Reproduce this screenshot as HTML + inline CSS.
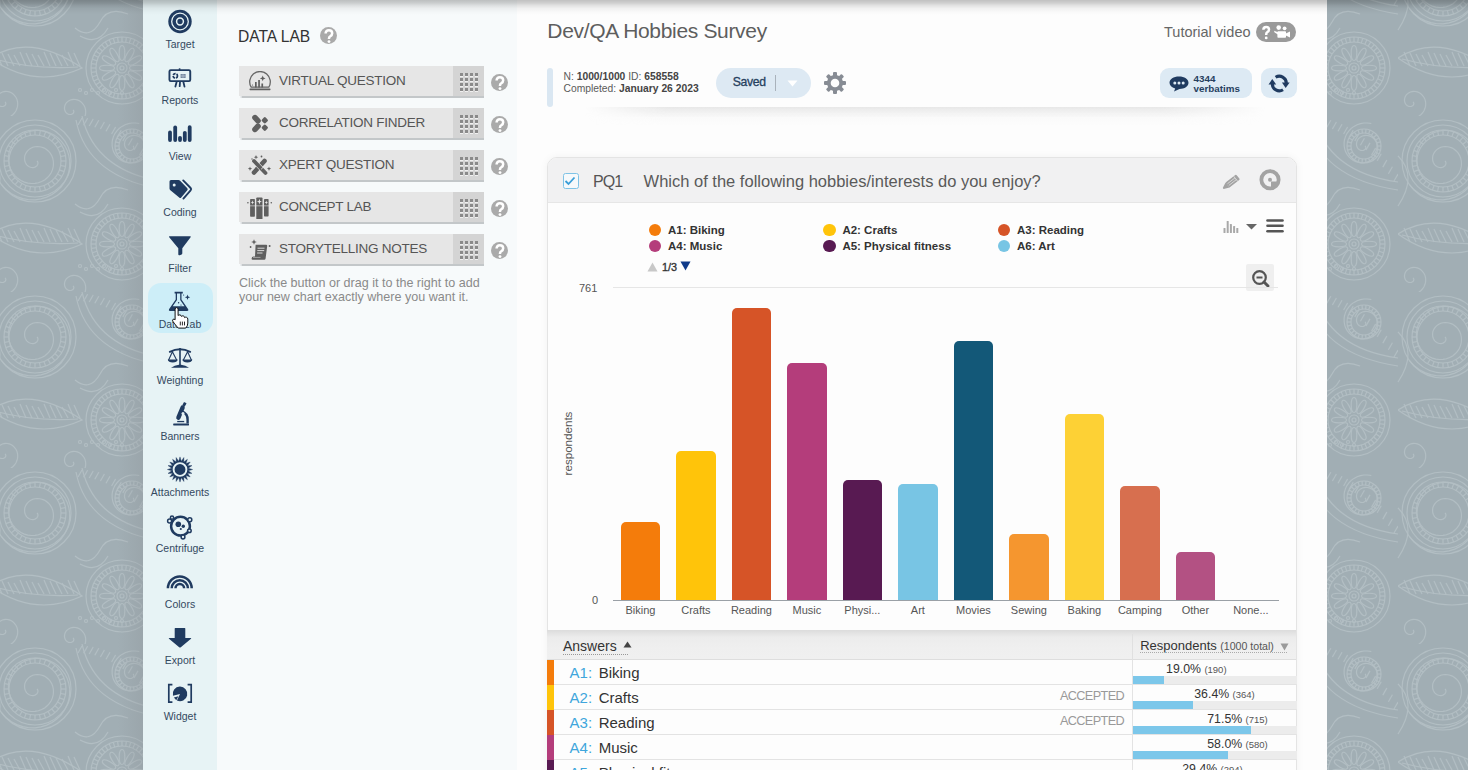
<!DOCTYPE html>
<html><head><meta charset="utf-8">
<style>
*{margin:0;padding:0;box-sizing:border-box}
html,body{width:1468px;height:770px;overflow:hidden}
body{background:#a1aeb4;font-family:"Liberation Sans",sans-serif;position:relative}
#sidebar{position:absolute;left:143px;top:0;width:74px;height:770px}
#sidebg{position:absolute;left:143px;top:0;width:74px;height:770px;background:#e7f3f5}
#datalab{position:absolute;left:217px;top:0;width:300px;height:770px;background:#f7fafb}
#main{position:absolute;left:517px;top:0;width:810px;height:770px;background:#fdfdfd}
#topshadow{position:absolute;left:0;top:0;width:1468px;height:15px;background:linear-gradient(rgba(0,0,0,.24),rgba(0,0,0,.18) 20%,rgba(0,0,0,.11) 36%,rgba(0,0,0,.05) 55%,rgba(0,0,0,.015) 80%,rgba(0,0,0,0))}
.nav{position:absolute;left:0;width:74px;height:56px}
.nav .ic{position:absolute;left:0;top:0}
.nav span{position:absolute;left:0;top:38px;width:74px;text-align:center;font-size:10.5px;color:#34495f;line-height:12px}
.nav .active{position:absolute;left:4.5px;top:3px;width:65px;height:50px;border-radius:13px;background:#cdeef8}
.dl-title{position:absolute;left:238px;top:27.5px;font-size:15.6px;color:#333;line-height:18px}
.help{position:absolute;width:17.6px;height:17.6px;border-radius:50%;background:#aaaaaa;color:#fff;font-weight:bold;font-size:15.5px;line-height:18.5px;text-align:center}
.btn{position:absolute;left:239px;width:245px;height:30px;background:#e6e6e6;box-shadow:0 2px 1px -0.5px #c3c7c9}
.btn .bic{position:absolute;left:8px;top:4.5px;width:26px;height:22px}
.btn .blab{position:absolute;left:40px;top:7px;font-size:13.5px;color:#555;line-height:16px;letter-spacing:-0.25px}
.btn .grip{position:absolute;left:214px;top:0;width:31px;height:30px;background:#d4d4d4}
.btn .grip svg{position:absolute;left:6px;top:5.5px}
.dl-desc{position:absolute;left:239px;top:276px;font-size:12.55px;color:#8a8a8a;line-height:14px}

.title{position:absolute;left:547.3px;top:18.5px;font-size:21px;letter-spacing:-0.33px;color:#5e5e5e;line-height:24px}
.tut{position:absolute;left:1164px;top:24px;font-size:14.5px;color:#666;line-height:17px}
.tutpill{position:absolute;left:1255.9px;top:21.8px;width:39.8px;height:19.8px;border-radius:10px;background:#9a9a9a}
.tutpill svg{position:absolute;left:0;top:0}
.infobar{position:absolute;left:547.4px;top:68px;width:5.4px;height:38.5px;border-radius:3px;background:#dae7f2}
.info1,.info2{position:absolute;left:563.5px;font-size:10.3px;color:#5a5a5a;line-height:12px;white-space:nowrap}
.info1 b,.info2 b{color:#444}
.info1{top:71px}.info2{top:82.7px}
.saved{position:absolute;left:715.8px;top:67.8px;width:95.4px;height:29.8px;border-radius:15px;background:#dde9f3}
.saved span{position:absolute;left:17px;top:7.3px;font-size:12.2px;color:#26405e;line-height:15px;letter-spacing:-0.35px;-webkit-text-stroke:0.3px #26405e}
.saved .sep{position:absolute;left:59.4px;top:7px;width:1px;height:16.3px;background:#a9b2bb}
.saved .tri{position:absolute;left:71px;top:12.5px}
.gear{position:absolute;left:823.4px;top:71px}
.verb{position:absolute;left:1159.6px;top:68px;width:92.2px;height:29.7px;border-radius:9px;background:#ddeaf4}
.verb svg{position:absolute;left:9px;top:8px}
.verb .vt{position:absolute;left:34px;top:6px;font-size:9.8px;line-height:10.2px;color:#26405e}
.refresh{position:absolute;left:1261.4px;top:68px;width:35.4px;height:29.7px;border-radius:9px;background:#ddeaf4}
.refresh svg{position:absolute;left:6.6px;top:4px}
.infoshadow{position:absolute;left:585px;top:107px;width:680px;height:18px;background:linear-gradient(rgba(215,215,215,0.55),rgba(240,240,240,0.2) 60%,rgba(255,255,255,0));-webkit-mask-image:linear-gradient(to right,transparent,#000 12%,#000 85%,transparent)}
.card{position:absolute;left:547.4px;top:157px;width:749.6px;height:620px;border:1px solid #e4e4e4;border-radius:10px 10px 0 0;background:#fdfdfd;box-shadow:0 0 8px rgba(0,0,0,0.05)}
.chead{position:absolute;left:0;top:0;width:747.6px;height:45.4px;background:#f1f1f2;border-radius:9px 9px 0 0;border-bottom:1px solid #e6e6e6}
.cbox{position:absolute;left:14.2px;top:14.8px;width:16.4px;height:16.4px;border:1.6px solid #7fc3e6;border-radius:2.5px;background:#f6f9fb}
.cbox svg{position:absolute;left:0.6px;top:2px}
.pq{position:absolute;left:44.5px;top:13.7px;font-size:16px;color:#555;line-height:19px;letter-spacing:-0.9px}
.qt{position:absolute;left:95.2px;top:13.7px;font-size:16.5px;color:#5a5a5a;line-height:19px}
.pencil{position:absolute;left:673.6px;top:15.3px}
.cicon{position:absolute;left:710.6px;top:10.8px}
.chartarea{position:absolute;left:0;top:0;width:1468px;height:770px;pointer-events:none}
.ldot{position:absolute;width:12.2px;height:12.2px;border-radius:50%}
.ltxt{position:absolute;font-size:11.5px;font-weight:bold;color:#333;line-height:14px;white-space:nowrap}
.navup{position:absolute;left:646.5px;top:261.5px}
.navdn{position:absolute;left:679.5px;top:260.5px}
.pg{position:absolute;left:662px;top:261px;font-size:10.8px;color:#333;line-height:13px;-webkit-text-stroke:0.35px #333}
.barico{position:absolute;left:1222.5px;top:219.5px}
.dd{position:absolute;left:1245.5px;top:223.5px}
.hamb{position:absolute;left:1266px;top:218.5px}
.zoombtn{position:absolute;left:1246px;top:264.2px;width:27.7px;height:27px;background:#efefef;border-radius:2px}
.zoombtn svg{position:absolute;left:3.5px;top:3.5px}
.grid{position:absolute;left:613px;top:287px;width:665px;height:1px;background:#e6e6e6}
.axis{position:absolute;left:613px;top:599.5px;width:666px;height:1px;background:#9aa0a6}
.yl{position:absolute;left:579px;font-size:11px;color:#555;line-height:13px}
.ylab{position:absolute;left:535px;top:437px;width:64px;font-size:11.6px;color:#555;line-height:13px;transform:rotate(-90deg);text-align:center}
.bar{position:absolute;width:39.2px;border-radius:5px 5px 0 0}
.xl{position:absolute;top:603.5px;width:80px;text-align:center;font-size:11px;color:#555;line-height:13px}
.thead{position:absolute;left:547.4px;top:630px;width:749px;height:30px;background:linear-gradient(#dcdcdc,#ececec 25%,#efefef 60%,#f0f0f0);border-bottom:1px solid #dedede}
.th1{position:absolute;left:15.6px;top:7.5px;font-size:14px;color:#333;line-height:17px}
.th1t{position:absolute;left:75.6px;top:11.3px}
.th1u{position:absolute;left:15.6px;top:24px;width:65px;height:1px;border-top:1px dotted #999}
.th2{position:absolute;left:592.8px;top:5.5px;white-space:nowrap;color:#333;line-height:17px}
.th2 .rs{font-size:13px}
.th2 .tot{font-size:10.6px;color:#555;margin-left:-1px}
.th2t{position:absolute;left:732.6px;top:12.5px}
.th2u{position:absolute;left:592.8px;top:21.5px;width:147px;height:1px;border-top:1px dotted #aaa}
.thead:after{content:"";position:absolute;left:584.9px;top:4px;width:1px;height:26px;background:#e0e0e0}
.row{position:absolute;left:547.4px;width:749px;height:25px;background:#fdfdfd;border-bottom:1px solid #e3e3e3}
.strip{position:absolute;left:0;top:0;width:6.3px;height:25px}
.ak{position:absolute;left:22.2px;top:4px;font-size:15px;color:#3fa6dc;line-height:18px}
.an{position:absolute;left:51.3px;top:4px;font-size:15px;color:#333;line-height:18px}
.acc{position:absolute;left:512.5px;top:3.8px;font-size:12.7px;color:#999;line-height:14px;letter-spacing:-0.62px}
.rcell{position:absolute;left:584.9px;top:0;width:164px;height:25px;border-left:1px solid #e3e3e3}
.track{position:absolute;left:0;top:15.9px;width:164px;height:8px;background:#ececec}
.fill{position:absolute;left:0;top:0;height:8px;background:#7cc7ea}
.pct{position:absolute;top:1.5px;font-size:12.3px;color:#333;line-height:14px;white-space:nowrap}
.pct small{font-size:9.5px;color:#555}
</style></head><body>
<svg id="bgpat" width="1468" height="770" style="position:absolute;left:0;top:0"><defs><pattern id="pz" width="176" height="176" patternUnits="userSpaceOnUse" x="-10" y="-60"><g fill="none" stroke="#b2bec3" stroke-width="1.15"><polyline points="47.0,45.0 47.4,45.4 47.7,45.9 47.9,46.5 47.9,47.1 47.9,47.9 47.6,48.6 47.2,49.3 46.6,50.0 45.9,50.6 45.0,51.1 44.0,51.4 42.9,51.6 41.7,51.5 40.5,51.2 39.3,50.7 38.1,50.0 37.0,49.1 36.1,47.9 35.4,46.5 34.8,45.0 34.6,43.3 34.6,41.6 34.8,39.8 35.5,38.1 36.4,36.4 37.6,34.8 39.1,33.4 40.8,32.2 42.8,31.3 45.0,30.7 47.3,30.5 49.7,30.7 52.0,31.2 54.3,32.1 56.5,33.5 58.5,35.2 60.2,37.2 61.7,39.6 62.7,42.2 63.3,45.0 63.5,47.9 63.2,50.9 62.4,53.9 61.2,56.7 59.4,59.4 57.2,61.8 54.6,63.9 51.7,65.5 48.4,66.7 45.0,67.4 41.4,67.5 37.8,67.1 34.3,66.1 30.9,64.5 27.7,62.3 24.9,59.6 22.5,56.5 20.6,52.9 19.2,49.1 18.5,45.0 18.4,40.8 19.0,36.6 20.3,32.4 22.2,28.5 24.8,24.8 28.0,21.6 31.7,18.8 35.8,16.7 40.3,15.2 45.0,14.4 49.8,14.4 54.7,15.1 59.4,16.7 63.9,18.9 68.1,21.9 71.7,25.6 74.8,29.8 77.2,34.5 78.8,39.6 79.7,45.0 79.6,50.5 78.8,56.0 77.0,61.3 74.4,66.3 71.0,71.0 66.8,75.0 62.0,78.4 56.7,81.1 51.0,82.9 45.0,83.8 38.9,83.7 32.8,82.6 26.8,80.6 21.3,77.7 16.2,73.8 11.7,69.2" fill="none"/><circle cx="45" cy="45" r="26"/><circle cx="45" cy="45" r="31"/><line x1="71.0" y1="45.0" x2="76.0" y2="45.0"/><line x1="70.6" y1="49.5" x2="75.5" y2="50.4"/><line x1="69.4" y1="53.9" x2="74.1" y2="55.6"/><line x1="67.5" y1="58.0" x2="71.8" y2="60.5"/><line x1="64.9" y1="61.7" x2="68.7" y2="64.9"/><line x1="61.7" y1="64.9" x2="64.9" y2="68.7"/><line x1="58.0" y1="67.5" x2="60.5" y2="71.8"/><line x1="53.9" y1="69.4" x2="55.6" y2="74.1"/><line x1="49.5" y1="70.6" x2="50.4" y2="75.5"/><line x1="45.0" y1="71.0" x2="45.0" y2="76.0"/><line x1="40.5" y1="70.6" x2="39.6" y2="75.5"/><line x1="36.1" y1="69.4" x2="34.4" y2="74.1"/><line x1="32.0" y1="67.5" x2="29.5" y2="71.8"/><line x1="28.3" y1="64.9" x2="25.1" y2="68.7"/><line x1="25.1" y1="61.7" x2="21.3" y2="64.9"/><line x1="22.5" y1="58.0" x2="18.2" y2="60.5"/><line x1="20.6" y1="53.9" x2="15.9" y2="55.6"/><line x1="19.4" y1="49.5" x2="14.5" y2="50.4"/><line x1="19.0" y1="45.0" x2="14.0" y2="45.0"/><line x1="19.4" y1="40.5" x2="14.5" y2="39.6"/><line x1="20.6" y1="36.1" x2="15.9" y2="34.4"/><line x1="22.5" y1="32.0" x2="18.2" y2="29.5"/><line x1="25.1" y1="28.3" x2="21.3" y2="25.1"/><line x1="28.3" y1="25.1" x2="25.1" y2="21.3"/><line x1="32.0" y1="22.5" x2="29.5" y2="18.2"/><line x1="36.1" y1="20.6" x2="34.4" y2="15.9"/><line x1="40.5" y1="19.4" x2="39.6" y2="14.5"/><line x1="45.0" y1="19.0" x2="45.0" y2="14.0"/><line x1="49.5" y1="19.4" x2="50.4" y2="14.5"/><line x1="53.9" y1="20.6" x2="55.6" y2="15.9"/><line x1="58.0" y1="22.5" x2="60.5" y2="18.2"/><line x1="61.7" y1="25.1" x2="64.9" y2="21.3"/><line x1="64.9" y1="28.3" x2="68.7" y2="25.1"/><line x1="67.5" y1="32.0" x2="71.8" y2="29.5"/><line x1="69.4" y1="36.1" x2="74.1" y2="34.4"/><line x1="70.6" y1="40.5" x2="75.5" y2="39.6"/><circle cx="45" cy="45" r="36"/><circle cx="45" cy="45" r="41"/><circle cx="132" cy="128" r="5"/><circle cx="132" cy="128" r="2"/><ellipse cx="147.0" cy="128.0" rx="7.5" ry="2.8" transform="rotate(0.0 147.0 128.0)"/><ellipse cx="145.0" cy="135.5" rx="7.5" ry="2.8" transform="rotate(30.0 145.0 135.5)"/><ellipse cx="139.5" cy="141.0" rx="7.5" ry="2.8" transform="rotate(60.0 139.5 141.0)"/><ellipse cx="132.0" cy="143.0" rx="7.5" ry="2.8" transform="rotate(90.0 132.0 143.0)"/><ellipse cx="124.5" cy="141.0" rx="7.5" ry="2.8" transform="rotate(120.0 124.5 141.0)"/><ellipse cx="119.0" cy="135.5" rx="7.5" ry="2.8" transform="rotate(150.0 119.0 135.5)"/><ellipse cx="117.0" cy="128.0" rx="7.5" ry="2.8" transform="rotate(180.0 117.0 128.0)"/><ellipse cx="119.0" cy="120.5" rx="7.5" ry="2.8" transform="rotate(210.0 119.0 120.5)"/><ellipse cx="124.5" cy="115.0" rx="7.5" ry="2.8" transform="rotate(240.0 124.5 115.0)"/><ellipse cx="132.0" cy="113.0" rx="7.5" ry="2.8" transform="rotate(270.0 132.0 113.0)"/><ellipse cx="139.5" cy="115.0" rx="7.5" ry="2.8" transform="rotate(300.0 139.5 115.0)"/><ellipse cx="145.0" cy="120.5" rx="7.5" ry="2.8" transform="rotate(330.0 145.0 120.5)"/><circle cx="132" cy="128" r="26"/><circle cx="132" cy="128" r="31"/><line x1="158.0" y1="128.0" x2="163.0" y2="128.0"/><line x1="157.7" y1="131.7" x2="162.7" y2="132.4"/><line x1="156.9" y1="135.3" x2="161.7" y2="136.7"/><line x1="155.7" y1="138.8" x2="160.2" y2="140.9"/><line x1="153.9" y1="142.1" x2="158.1" y2="144.8"/><line x1="151.6" y1="145.0" x2="155.4" y2="148.3"/><line x1="149.0" y1="147.6" x2="152.3" y2="151.4"/><line x1="146.1" y1="149.9" x2="148.8" y2="154.1"/><line x1="142.8" y1="151.7" x2="144.9" y2="156.2"/><line x1="139.3" y1="152.9" x2="140.7" y2="157.7"/><line x1="135.7" y1="153.7" x2="136.4" y2="158.7"/><line x1="132.0" y1="154.0" x2="132.0" y2="159.0"/><line x1="128.3" y1="153.7" x2="127.6" y2="158.7"/><line x1="124.7" y1="152.9" x2="123.3" y2="157.7"/><line x1="121.2" y1="151.7" x2="119.1" y2="156.2"/><line x1="117.9" y1="149.9" x2="115.2" y2="154.1"/><line x1="115.0" y1="147.6" x2="111.7" y2="151.4"/><line x1="112.4" y1="145.0" x2="108.6" y2="148.3"/><line x1="110.1" y1="142.1" x2="105.9" y2="144.8"/><line x1="108.3" y1="138.8" x2="103.8" y2="140.9"/><line x1="107.1" y1="135.3" x2="102.3" y2="136.7"/><line x1="106.3" y1="131.7" x2="101.3" y2="132.4"/><line x1="106.0" y1="128.0" x2="101.0" y2="128.0"/><line x1="106.3" y1="124.3" x2="101.3" y2="123.6"/><line x1="107.1" y1="120.7" x2="102.3" y2="119.3"/><line x1="108.3" y1="117.2" x2="103.8" y2="115.1"/><line x1="110.1" y1="113.9" x2="105.9" y2="111.2"/><line x1="112.4" y1="111.0" x2="108.6" y2="107.7"/><line x1="115.0" y1="108.4" x2="111.7" y2="104.6"/><line x1="117.9" y1="106.1" x2="115.2" y2="101.9"/><line x1="121.2" y1="104.3" x2="119.1" y2="99.8"/><line x1="124.7" y1="103.1" x2="123.3" y2="98.3"/><line x1="128.3" y1="102.3" x2="127.6" y2="97.3"/><line x1="132.0" y1="102.0" x2="132.0" y2="97.0"/><line x1="135.7" y1="102.3" x2="136.4" y2="97.3"/><line x1="139.3" y1="103.1" x2="140.7" y2="98.3"/><line x1="142.8" y1="104.3" x2="144.9" y2="99.8"/><line x1="146.1" y1="106.1" x2="148.8" y2="101.9"/><line x1="149.0" y1="108.4" x2="152.3" y2="104.6"/><line x1="151.6" y1="111.0" x2="155.4" y2="107.7"/><line x1="153.9" y1="113.9" x2="158.1" y2="111.2"/><line x1="155.7" y1="117.2" x2="160.2" y2="115.1"/><line x1="156.9" y1="120.7" x2="161.7" y2="119.3"/><line x1="157.7" y1="124.3" x2="162.7" y2="123.6"/><circle cx="132" cy="128" r="36"/><path d="M0 118 Q40 92 92 128 Q45 150 0 118 Z"/><path d="M4 119 Q45 130 88 127"/><line x1="6" y1="112" x2="12" y2="126"/><line x1="12" y1="113" x2="18" y2="126"/><line x1="18" y1="114" x2="24" y2="126"/><line x1="24" y1="115" x2="30" y2="126"/><line x1="30" y1="112" x2="36" y2="126"/><line x1="36" y1="113" x2="42" y2="126"/><line x1="42" y1="114" x2="48" y2="126"/><line x1="48" y1="115" x2="54" y2="126"/><line x1="54" y1="112" x2="60" y2="126"/><line x1="60" y1="113" x2="66" y2="126"/><line x1="66" y1="114" x2="72" y2="126"/><line x1="72" y1="115" x2="78" y2="126"/><line x1="78" y1="112" x2="84" y2="126"/><line x1="84" y1="113" x2="90" y2="126"/><polyline points="143.0,30.0 143.3,30.2 143.5,30.5 143.7,30.9 143.8,31.3 143.8,31.8 143.7,32.3 143.5,32.9 143.1,33.3 142.6,33.8 142.0,34.1 141.3,34.4 140.5,34.5 139.7,34.5 138.8,34.4 138.0,34.0 137.1,33.5 136.4,32.9 135.7,32.1 135.1,31.1 134.7,30.0 134.5,28.8 134.5,27.6 134.7,26.3 135.1,25.0 135.7,23.7 136.6,22.6 137.7,21.6 139.0,20.7 140.4,20.0 142.0,19.6 143.7,19.4 145.4,19.5 147.2,19.9 148.9,20.5 150.5,21.5 152.0,22.8 153.2,24.3 154.3,26.0 155.1,27.9 155.6,30.0 155.7,32.2 155.5,34.4 154.9,36.6 154.0,38.7 152.7,40.7 151.1,42.5 149.2,44.0 147.0,45.3 144.6,46.2 142.0,46.7 139.3,46.8 136.6,46.5 134.0,45.7 131.4,44.5 129.1,42.9 127.0,40.9 125.2,38.6 123.7,35.9 122.7,33.1 122.2,30.0 122.1,26.8 122.5,23.7 123.5,20.6 124.9,17.6 126.9,14.9 129.2,12.4 132.0,10.4 135.1,8.7 138.5,7.6 142.0,7.0 145.6,7.0 149.3,7.5" fill="none"/><circle cx="142" cy="30" r="13"/><circle cx="142" cy="30" r="17"/><line x1="155.0" y1="30.0" x2="159.0" y2="30.0"/><line x1="154.6" y1="33.1" x2="158.5" y2="34.1"/><line x1="153.5" y1="36.0" x2="157.1" y2="37.9"/><line x1="151.7" y1="38.6" x2="154.7" y2="41.3"/><line x1="149.4" y1="40.7" x2="151.7" y2="44.0"/><line x1="146.6" y1="42.2" x2="148.0" y2="45.9"/><line x1="143.6" y1="42.9" x2="144.0" y2="46.9"/><line x1="140.4" y1="42.9" x2="140.0" y2="46.9"/><line x1="137.4" y1="42.2" x2="136.0" y2="45.9"/><line x1="134.6" y1="40.7" x2="132.3" y2="44.0"/><line x1="132.3" y1="38.6" x2="129.3" y2="41.3"/><line x1="130.5" y1="36.0" x2="126.9" y2="37.9"/><line x1="129.4" y1="33.1" x2="125.5" y2="34.1"/><line x1="129.0" y1="30.0" x2="125.0" y2="30.0"/><line x1="129.4" y1="26.9" x2="125.5" y2="25.9"/><line x1="130.5" y1="24.0" x2="126.9" y2="22.1"/><line x1="132.3" y1="21.4" x2="129.3" y2="18.7"/><line x1="134.6" y1="19.3" x2="132.3" y2="16.0"/><line x1="137.4" y1="17.8" x2="136.0" y2="14.1"/><line x1="140.4" y1="17.1" x2="140.0" y2="13.1"/><line x1="143.6" y1="17.1" x2="144.0" y2="13.1"/><line x1="146.6" y1="17.8" x2="148.0" y2="14.1"/><line x1="149.4" y1="19.3" x2="151.7" y2="16.0"/><line x1="151.7" y1="21.4" x2="154.7" y2="18.7"/><line x1="153.5" y1="24.0" x2="157.1" y2="22.1"/><line x1="154.6" y1="26.9" x2="158.5" y2="25.9"/><polyline points="83.0,170.0 83.3,170.2 83.5,170.5 83.7,170.9 83.8,171.3 83.8,171.8 83.7,172.3 83.5,172.9 83.1,173.3 82.6,173.8 82.0,174.1 81.3,174.4 80.5,174.5 79.7,174.5 78.8,174.4 78.0,174.0 77.1,173.5 76.4,172.9 75.7,172.1 75.1,171.1 74.7,170.0 74.5,168.8 74.5,167.6 74.7,166.3 75.1,165.0 75.7,163.7 76.6,162.6 77.7,161.6 79.0,160.7 80.4,160.0 82.0,159.6 83.7,159.4 85.4,159.5 87.2,159.9 88.9,160.5 90.5,161.5 92.0,162.8 93.2,164.3 94.3,166.0 95.1,167.9 95.6,170.0 95.7,172.2 95.5,174.4 94.9,176.6 94.0,178.7 92.7,180.7 91.1,182.5 89.2,184.0 87.0,185.3 84.6,186.2 82.0,186.7 79.3,186.8 76.6,186.5 74.0,185.7 71.4,184.5 69.1,182.9 67.0,180.9" fill="none"/><polyline points="15.0,162.0 15.3,162.2 15.5,162.5 15.7,162.9 15.8,163.3 15.8,163.8 15.7,164.3 15.5,164.9 15.1,165.3 14.6,165.8 14.0,166.1 13.3,166.4 12.5,166.5 11.7,166.5 10.8,166.4 10.0,166.0 9.1,165.5 8.4,164.9 7.7,164.1 7.1,163.1 6.7,162.0 6.5,160.8 6.5,159.6 6.7,158.3 7.1,157.0 7.7,155.7 8.6,154.6 9.7,153.6 11.0,152.7 12.4,152.0 14.0,151.6 15.7,151.4 17.4,151.5 19.2,151.9 20.9,152.5 22.5,153.5 24.0,154.8 25.2,156.3 26.3,158.0 27.1,159.9 27.6,162.0 27.7,164.2 27.5,166.4 26.9,168.6 26.0,170.7 24.7,172.7 23.1,174.5 21.2,176.0 19.0,177.3 16.6,178.2 14.0,178.7 11.3,178.8 8.6,178.5" fill="none"/><path d="M92 0 Q105 56 176 66"/><path d="M86 4 Q97 62 176 74"/><line x1="92.0" y1="2.0" x2="88.0" y2="9.0"/><line x1="97.6" y1="2.2" x2="93.6" y2="9.2"/><line x1="103.2" y1="3.0" x2="99.2" y2="10.0"/><line x1="108.8" y1="4.2" x2="104.8" y2="11.2"/><line x1="114.4" y1="6.0" x2="110.4" y2="13.0"/><line x1="120.0" y1="8.2" x2="116.0" y2="15.2"/><line x1="125.6" y1="11.0" x2="121.6" y2="18.0"/><line x1="131.2" y1="14.2" x2="127.2" y2="21.2"/><line x1="136.8" y1="17.9" x2="132.8" y2="24.9"/><line x1="142.4" y1="22.2" x2="138.4" y2="29.2"/><line x1="148.0" y1="26.9" x2="144.0" y2="33.9"/><line x1="153.6" y1="32.1" x2="149.6" y2="39.1"/><line x1="159.2" y1="37.8" x2="155.2" y2="44.8"/><line x1="164.8" y1="44.1" x2="160.8" y2="51.1"/><line x1="170.4" y1="50.8" x2="166.4" y2="57.8"/><line x1="176.0" y1="58.0" x2="172.0" y2="65.0"/><path d="M0 90 Q20 60 0 40"/><path d="M176 90 Q196 60 176 40"/><path d="M85 88 Q100 100 110 82 Q118 66 138 74"/><path d="M90 96 Q108 106 118 88"/><circle cx="90" cy="150" r="1.5"/><circle cx="96" cy="153" r="1.5"/><circle cx="102" cy="150" r="1.5"/><circle cx="108" cy="153" r="1.5"/><circle cx="114" cy="150" r="1.5"/><circle cx="120" cy="153" r="1.5"/><circle cx="126" cy="150" r="1.5"/><circle cx="132" cy="153" r="1.5"/></g></pattern><linearGradient id="edge" x1="0" x2="1"><stop offset="0" stop-color="#8f969b" stop-opacity="0"/><stop offset="1" stop-color="#8f969b" stop-opacity="0.35"/></linearGradient></defs><rect width="1468" height="770" fill="url(#pz)"/><rect x="118" y="0" width="25" height="770" fill="url(#edge)"/></svg>
<div id="sidebg"></div><div id="datalab"></div><div id="main"></div><div id="topshadow"></div>
<div id="sidebar">
<div class="nav" style="top:0px"><svg class="ic" width="74" height="56"><circle cx="37" cy="21.5" r="11.7" fill="#203b60"/><circle cx="37" cy="21.5" r="8.3" fill="none" stroke="#e7f3f5" stroke-width="1.3"/><circle cx="37" cy="21.5" r="3.4" fill="none" stroke="#e7f3f5" stroke-width="1.5"/></svg><span>Target</span></div>
<div class="nav" style="top:56px"><svg class="ic" width="74" height="56"><rect x="26.45" y="14.15" width="20.8" height="11" rx="1.3" fill="none" stroke="#203b60" stroke-width="1.9"/><rect x="35.8" y="12.3" width="1.6" height="2" fill="#203b60"/><circle cx="32.3" cy="19.9" r="2.2" fill="none" stroke="#203b60" stroke-width="1.7" stroke-dasharray="2.6 0.9"/><rect x="37.6" y="18" width="5" height="4" fill="#6d809a"/><path d="M37.6 19.3 H42.6 M37.6 20.7 H42.6 M40 18 V22" stroke="#c7d0da" stroke-width="0.5"/><path d="M33.6 26 L32.4 30.6 M37 26 L36.7 30.2 M40.4 26 L41.5 30.6" stroke="#203b60" stroke-width="1.8" stroke-linecap="round"/></svg><span>Reports</span></div>
<div class="nav" style="top:112px"><svg class="ic" width="74" height="56"><g stroke="#203b60" stroke-width="3.8" stroke-linecap="round"><path d="M27 20.5 V28.1"/><path d="M32.2 15.5 V28.1"/><path d="M37 25.8 V28.1"/><path d="M41.8 20.8 V28.1"/><path d="M46.7 15.1 V28.1"/></g></svg><span>View</span></div>
<div class="nav" style="top:168px"><svg class="ic" width="74" height="56"><path d="M28 12 H35.5 Q36.3 12 36.9 12.6 L44.3 20.2 Q45.2 21.2 44.3 22.2 L38.2 29.6 Q37.2 30.6 36.2 29.6 L27.1 21.9 Q26.5 21.3 26.5 20.5 V13.5 Q26.5 12 28 12 Z" fill="#203b60"/><circle cx="31.2" cy="16.9" r="1.5" fill="#e7f3f5"/><path d="M40.2 12.4 L47.6 20 Q48.7 21.2 47.6 22.4 L40.4 30.6" fill="none" stroke="#203b60" stroke-width="1.9" stroke-linecap="round"/></svg><span>Coding</span></div>
<div class="nav" style="top:224px"><svg class="ic" width="74" height="56"><path d="M26.6 12.3 H47.2 Q48.2 12.3 47.6 13.2 L39.3 24.3 V29.2 Q39.3 30 38.6 30.4 L36.8 31.2 Q35.3 31.8 35.3 30.2 V24.3 L26.2 13.2 Q25.6 12.3 26.6 12.3 Z" fill="#203b60"/></svg><span>Filter</span></div>
<div class="nav" style="top:280px"><div class="active"></div><svg class="ic" width="74" height="56"><path d="M31.6 11.8 H39.8 V13.4 H38.5 V19.6 L45.2 29.3 Q45.9 31 44.2 31 H27 Q25.3 31 26 29.3 L32.7 19.6 V13.4 H31.6 Z" fill="#203b60"/><path d="M34 13.4 H37.2 V20 L41.5 26.3 H29.7 L34 20 Z" fill="#cdeef8"/><circle cx="35.6" cy="22.8" r="0.7" fill="#203b60"/><circle cx="38" cy="25" r="0.6" fill="#203b60"/><path d="M44.5 14.6 L45.2 16.6 L47.2 17.3 L45.2 18 L44.5 20 L43.8 18 L41.8 17.3 L43.8 16.6 Z" fill="#203b60"/><circle cx="40.6" cy="15" r="0.6" fill="#203b60"/></svg><span>Data Lab</span><svg class="ic" width="74" height="56"><g transform="translate(29.1 27.6)"><path d="M3 1.6 Q3 0 4.5 0 Q6 0 6 1.6 V8 Q6.5 7.1 7.8 7.3 Q9.2 7.5 9.3 8.8 Q10 8 11.2 8.3 Q12.4 8.6 12.5 10 Q13.3 9.3 14.4 9.7 Q15.7 10.1 15.7 11.5 V15.5 Q15.7 18.5 13.6 20.5 H6.2 Q4.6 18.8 2.6 16.3 L0.7 13.6 Q0 12.4 1 11.7 Q2 11.1 3 12.2 Z" fill="#fff" stroke="#111" stroke-width="1"/><path d="M8.2 14 V17.8 M10.3 14 V17.8 M12.4 14 V17.8" stroke="#111" stroke-width="0.9"/></g></svg></div>
<div class="nav" style="top:336px"><svg class="ic" width="74" height="56"><path d="M26.8 15.8 Q37 10.6 47.2 15.8" fill="none" stroke="#203b60" stroke-width="1.9" stroke-linecap="round"/><path d="M37 12 V30" stroke="#203b60" stroke-width="1.6"/><g fill="none" stroke="#203b60" stroke-width="1.1"><path d="M25.4 24.4 L29.4 15.8 L33.9 24.4"/><path d="M40.1 24.4 L44.6 15.8 L48.6 24.4"/></g><path d="M24.8 23.6 H34.7 Q34.3 26.6 29.75 26.6 Q25.2 26.6 24.8 23.6 Z" fill="#203b60"/><path d="M39.4 23.6 H49.3 Q48.9 26.6 44.35 26.6 Q39.8 26.6 39.4 23.6 Z" fill="#203b60"/><path d="M28 31.8 Q31 29.6 37 28.6 Q43 29.6 46 31.8 Z" fill="#203b60"/></svg><span>Weighting</span></div>
<div class="nav" style="top:392px"><svg class="ic" width="74" height="56"><rect x="40" y="10.4" width="2.8" height="3.8" rx="0.4" fill="#203b60" transform="rotate(28 41.4 12.3)"/><path d="M39.6 15.6 L35.4 25.6" stroke="#203b60" stroke-width="4.4" stroke-linecap="round"/><path d="M38.6 19.2 Q44.8 21.6 44.6 27.8 V31.5" fill="none" stroke="#203b60" stroke-width="2.4"/><circle cx="40" cy="21.4" r="1.5" fill="#e7f3f5"/><rect x="34.2" y="28.9" width="7" height="1.3" fill="#203b60"/><rect x="30.2" y="31.5" width="15.8" height="2" rx="0.4" fill="#203b60"/></svg><span>Banners</span></div>
<div class="nav" style="top:448px"><svg class="ic" width="74" height="56"><polygon points="37.00,8.90 38.31,13.20 40.89,9.52 40.81,14.02 44.41,11.31 42.94,15.56 47.19,14.09 44.48,17.69 48.98,17.61 45.30,20.19 49.60,21.50 45.30,22.81 48.98,25.39 44.48,25.31 47.19,28.91 42.94,27.44 44.41,31.69 40.81,28.98 40.89,33.48 38.31,29.80 37.00,34.10 35.69,29.80 33.11,33.48 33.19,28.98 29.59,31.69 31.06,27.44 26.81,28.91 29.52,25.31 25.02,25.39 28.70,22.81 24.40,21.50 28.70,20.19 25.02,17.61 29.52,17.69 26.81,14.09 31.06,15.56 29.59,11.31 33.19,14.02 33.11,9.52 35.69,13.20" fill="#203b60" stroke="#203b60" stroke-width="0.4" stroke-linejoin="round"/><circle cx="37" cy="21.5" r="6.4" fill="none" stroke="#e7f3f5" stroke-width="1.9"/></svg><span>Attachments</span></div>
<div class="nav" style="top:504px"><svg class="ic" width="74" height="56"><circle cx="37.5" cy="22.2" r="9.4" fill="none" stroke="#203b60" stroke-width="2.5"/><g fill="#e7f3f5" stroke="#203b60" stroke-width="1.5"><circle cx="29" cy="13.6" r="1.6"/><circle cx="26.6" cy="17" r="2"/><circle cx="46.8" cy="15.8" r="2"/><circle cx="46.4" cy="26.8" r="1.8"/><circle cx="40" cy="33" r="1.9"/></g><circle cx="35.3" cy="20.3" r="2.8" fill="#203b60"/><circle cx="40.3" cy="22.2" r="1.7" fill="#203b60"/><circle cx="37.8" cy="25" r="1.1" fill="#203b60"/></svg><span>Centrifuge</span></div>
<div class="nav" style="top:560px"><svg class="ic" width="74" height="56"><g fill="none" stroke="#203b60" stroke-width="2.5" stroke-linecap="butt"><path d="M24.9 28.3 A11.9 11.9 0 0 1 48.7 28.3"/><path d="M28.7 28.3 A8.1 8.1 0 0 1 44.9 28.3"/><path d="M32.5 28.3 A4.3 4.3 0 0 1 41.1 28.3"/></g></svg><span>Colors</span></div>
<div class="nav" style="top:616px"><svg class="ic" width="74" height="56"><path d="M32.3 11.9 H41.7 Q42.3 11.9 42.3 12.5 V21.9 H47.6 Q48.8 21.9 48 22.8 L37.8 31.2 Q37 32 36.2 31.2 L26 22.8 Q25.2 21.9 26.4 21.9 H31.7 V12.5 Q31.7 11.9 32.3 11.9 Z" fill="#203b60"/></svg><span>Export</span></div>
<div class="nav" style="top:672px"><svg class="ic" width="74" height="56"><path d="M29.4 12.6 H25.8 V30.2 H29.4" fill="none" stroke="#203b60" stroke-width="1.7"/><path d="M44.6 12.6 H48.2 V30.2 H44.6" fill="none" stroke="#203b60" stroke-width="1.7"/><path d="M37 21.9 L29.95 23.79 A7.3 7.3 0 1 1 33.91 28.52 Z" fill="#203b60"/><path d="M35.4 24.2 L33.3 28.2 L30.9 25.6 Z" fill="#203b60"/></svg><span>Widget</span></div>
</div>

<div class="dl-title">DATA LAB</div>
<div class="help" style="left:319.5px;top:26.5px"><svg width="17.6" height="17.6" viewBox="0 0 17.6 17.6" style="position:absolute;left:0;top:0"><path d="M5.6 6.6 Q5.6 3.3 8.9 3.3 Q12.2 3.3 12.2 6.3 Q12.2 8.3 10.2 9.3 Q9 9.9 9 11.4 V12" fill="none" stroke="#fff" stroke-width="2.5"/><circle cx="9" cy="14.6" r="1.45" fill="#fff"/></svg></div>
<div class="btn" style="top:66px"><div class="bic"><svg width="26" height="22" viewBox="0 0 26 22"><path d="M4.2 16.2 A10.3 10.3 0 1 1 21.8 16.2 Z" fill="none" stroke="#666" stroke-width="1.3"/><rect x="2.5" y="17.6" width="21" height="1.6" rx="0.6" fill="#5f5f5f"/><rect x="8" y="11" width="1.7" height="5.5" fill="#5f5f5f"/><rect x="11.2" y="9" width="1.7" height="7.5" fill="#5f5f5f"/><rect x="14.4" y="12.5" width="1.7" height="4" fill="#5f5f5f"/><circle cx="5.5" cy="14" r="0.6" fill="#5f5f5f"/><path d="M15.7 4.6 L16.5 6.6 L18.5 7.4 L16.5 8.2 L15.7 10.2 L14.9 8.2 L12.9 7.4 L14.9 6.6 Z" fill="#5f5f5f"/></svg></div><span class="blab">VIRTUAL QUESTION</span><div class="grip"><svg width="20" height="20" viewBox="0 0 20 20"><rect x="1" y="1" width="3" height="3" fill="#8a8a8a"/><rect x="1" y="4" width="3" height="1" fill="#f0f0f0"/><rect x="1" y="6" width="3" height="3" fill="#8a8a8a"/><rect x="1" y="9" width="3" height="1" fill="#f0f0f0"/><rect x="1" y="11" width="3" height="3" fill="#8a8a8a"/><rect x="1" y="14" width="3" height="1" fill="#f0f0f0"/><rect x="1" y="16" width="3" height="3" fill="#8a8a8a"/><rect x="1" y="19" width="3" height="1" fill="#f0f0f0"/><rect x="6" y="1" width="3" height="3" fill="#8a8a8a"/><rect x="6" y="4" width="3" height="1" fill="#f0f0f0"/><rect x="6" y="6" width="3" height="3" fill="#8a8a8a"/><rect x="6" y="9" width="3" height="1" fill="#f0f0f0"/><rect x="6" y="11" width="3" height="3" fill="#8a8a8a"/><rect x="6" y="14" width="3" height="1" fill="#f0f0f0"/><rect x="6" y="16" width="3" height="3" fill="#8a8a8a"/><rect x="6" y="19" width="3" height="1" fill="#f0f0f0"/><rect x="11" y="1" width="3" height="3" fill="#8a8a8a"/><rect x="11" y="4" width="3" height="1" fill="#f0f0f0"/><rect x="11" y="6" width="3" height="3" fill="#8a8a8a"/><rect x="11" y="9" width="3" height="1" fill="#f0f0f0"/><rect x="11" y="11" width="3" height="3" fill="#8a8a8a"/><rect x="11" y="14" width="3" height="1" fill="#f0f0f0"/><rect x="11" y="16" width="3" height="3" fill="#8a8a8a"/><rect x="11" y="19" width="3" height="1" fill="#f0f0f0"/><rect x="16" y="1" width="3" height="3" fill="#8a8a8a"/><rect x="16" y="4" width="3" height="1" fill="#f0f0f0"/><rect x="16" y="6" width="3" height="3" fill="#8a8a8a"/><rect x="16" y="9" width="3" height="1" fill="#f0f0f0"/><rect x="16" y="11" width="3" height="3" fill="#8a8a8a"/><rect x="16" y="14" width="3" height="1" fill="#f0f0f0"/><rect x="16" y="16" width="3" height="3" fill="#8a8a8a"/><rect x="16" y="19" width="3" height="1" fill="#f0f0f0"/></svg></div></div><div class="help" style="left:490.5px;top:73.5px"><svg width="17.6" height="17.6" viewBox="0 0 17.6 17.6" style="position:absolute;left:0;top:0"><path d="M5.6 6.6 Q5.6 3.3 8.9 3.3 Q12.2 3.3 12.2 6.3 Q12.2 8.3 10.2 9.3 Q9 9.9 9 11.4 V12" fill="none" stroke="#fff" stroke-width="2.5"/><circle cx="9" cy="14.6" r="1.45" fill="#fff"/></svg></div>
<div class="btn" style="top:108px"><div class="bic"><svg width="26" height="22" viewBox="0 0 26 22"><g stroke="#5f5f5f" stroke-width="5.6" stroke-linecap="round"><path d="M8 4.6 L11 7.8"/><path d="M8 16.4 L11 13.2"/></g><g fill="#5f5f5f"><rect x="15.2" y="4.7" width="5.2" height="5.2" rx="1.3" transform="rotate(45 17.8 7.3)"/><rect x="15.2" y="12.1" width="5.2" height="5.2" rx="1.3" transform="rotate(45 17.8 14.7)"/></g></svg></div><span class="blab">CORRELATION FINDER</span><div class="grip"><svg width="20" height="20" viewBox="0 0 20 20"><rect x="1" y="1" width="3" height="3" fill="#8a8a8a"/><rect x="1" y="4" width="3" height="1" fill="#f0f0f0"/><rect x="1" y="6" width="3" height="3" fill="#8a8a8a"/><rect x="1" y="9" width="3" height="1" fill="#f0f0f0"/><rect x="1" y="11" width="3" height="3" fill="#8a8a8a"/><rect x="1" y="14" width="3" height="1" fill="#f0f0f0"/><rect x="1" y="16" width="3" height="3" fill="#8a8a8a"/><rect x="1" y="19" width="3" height="1" fill="#f0f0f0"/><rect x="6" y="1" width="3" height="3" fill="#8a8a8a"/><rect x="6" y="4" width="3" height="1" fill="#f0f0f0"/><rect x="6" y="6" width="3" height="3" fill="#8a8a8a"/><rect x="6" y="9" width="3" height="1" fill="#f0f0f0"/><rect x="6" y="11" width="3" height="3" fill="#8a8a8a"/><rect x="6" y="14" width="3" height="1" fill="#f0f0f0"/><rect x="6" y="16" width="3" height="3" fill="#8a8a8a"/><rect x="6" y="19" width="3" height="1" fill="#f0f0f0"/><rect x="11" y="1" width="3" height="3" fill="#8a8a8a"/><rect x="11" y="4" width="3" height="1" fill="#f0f0f0"/><rect x="11" y="6" width="3" height="3" fill="#8a8a8a"/><rect x="11" y="9" width="3" height="1" fill="#f0f0f0"/><rect x="11" y="11" width="3" height="3" fill="#8a8a8a"/><rect x="11" y="14" width="3" height="1" fill="#f0f0f0"/><rect x="11" y="16" width="3" height="3" fill="#8a8a8a"/><rect x="11" y="19" width="3" height="1" fill="#f0f0f0"/><rect x="16" y="1" width="3" height="3" fill="#8a8a8a"/><rect x="16" y="4" width="3" height="1" fill="#f0f0f0"/><rect x="16" y="6" width="3" height="3" fill="#8a8a8a"/><rect x="16" y="9" width="3" height="1" fill="#f0f0f0"/><rect x="16" y="11" width="3" height="3" fill="#8a8a8a"/><rect x="16" y="14" width="3" height="1" fill="#f0f0f0"/><rect x="16" y="16" width="3" height="3" fill="#8a8a8a"/><rect x="16" y="19" width="3" height="1" fill="#f0f0f0"/></svg></div></div><div class="help" style="left:490.5px;top:115.5px"><svg width="17.6" height="17.6" viewBox="0 0 17.6 17.6" style="position:absolute;left:0;top:0"><path d="M5.6 6.6 Q5.6 3.3 8.9 3.3 Q12.2 3.3 12.2 6.3 Q12.2 8.3 10.2 9.3 Q9 9.9 9 11.4 V12" fill="none" stroke="#fff" stroke-width="2.5"/><circle cx="9" cy="14.6" r="1.45" fill="#fff"/></svg></div>
<div class="btn" style="top:150px"><div class="bic"><svg width="26" height="22" viewBox="0 0 26 22"><g stroke="#5f5f5f" stroke-linecap="round"><path d="M17.5 6 L7 17.5" stroke-width="4.6"/><path d="M7 6 L18.5 18" stroke-width="4.8" stroke="#e6e6e6"/><path d="M7 6 L18.5 18" stroke-width="3.8"/></g><path d="M14.2 14.2 L16.4 12" stroke="#e6e6e6" stroke-width="1"/><g fill="#5f5f5f"><path d="M9 0 L9.6 1.6 L11.2 2.2 L9.6 2.8 L9 4.4 L8.4 2.8 L6.8 2.2 L8.4 1.6 Z"/><path d="M3 11.5 L3.6 13.1 L5.2 13.7 L3.6 14.3 L3 15.9 L2.4 14.3 L0.8 13.7 L2.4 13.1 Z"/><path d="M22 11.5 L22.6 13.1 L24.2 13.7 L22.6 14.3 L22 15.9 L21.4 14.3 L19.8 13.7 L21.4 13.1 Z"/><circle cx="14.5" cy="1.5" r="0.9"/><circle cx="5" cy="4" r="0.7"/></g></svg></div><span class="blab">XPERT QUESTION</span><div class="grip"><svg width="20" height="20" viewBox="0 0 20 20"><rect x="1" y="1" width="3" height="3" fill="#8a8a8a"/><rect x="1" y="4" width="3" height="1" fill="#f0f0f0"/><rect x="1" y="6" width="3" height="3" fill="#8a8a8a"/><rect x="1" y="9" width="3" height="1" fill="#f0f0f0"/><rect x="1" y="11" width="3" height="3" fill="#8a8a8a"/><rect x="1" y="14" width="3" height="1" fill="#f0f0f0"/><rect x="1" y="16" width="3" height="3" fill="#8a8a8a"/><rect x="1" y="19" width="3" height="1" fill="#f0f0f0"/><rect x="6" y="1" width="3" height="3" fill="#8a8a8a"/><rect x="6" y="4" width="3" height="1" fill="#f0f0f0"/><rect x="6" y="6" width="3" height="3" fill="#8a8a8a"/><rect x="6" y="9" width="3" height="1" fill="#f0f0f0"/><rect x="6" y="11" width="3" height="3" fill="#8a8a8a"/><rect x="6" y="14" width="3" height="1" fill="#f0f0f0"/><rect x="6" y="16" width="3" height="3" fill="#8a8a8a"/><rect x="6" y="19" width="3" height="1" fill="#f0f0f0"/><rect x="11" y="1" width="3" height="3" fill="#8a8a8a"/><rect x="11" y="4" width="3" height="1" fill="#f0f0f0"/><rect x="11" y="6" width="3" height="3" fill="#8a8a8a"/><rect x="11" y="9" width="3" height="1" fill="#f0f0f0"/><rect x="11" y="11" width="3" height="3" fill="#8a8a8a"/><rect x="11" y="14" width="3" height="1" fill="#f0f0f0"/><rect x="11" y="16" width="3" height="3" fill="#8a8a8a"/><rect x="11" y="19" width="3" height="1" fill="#f0f0f0"/><rect x="16" y="1" width="3" height="3" fill="#8a8a8a"/><rect x="16" y="4" width="3" height="1" fill="#f0f0f0"/><rect x="16" y="6" width="3" height="3" fill="#8a8a8a"/><rect x="16" y="9" width="3" height="1" fill="#f0f0f0"/><rect x="16" y="11" width="3" height="3" fill="#8a8a8a"/><rect x="16" y="14" width="3" height="1" fill="#f0f0f0"/><rect x="16" y="16" width="3" height="3" fill="#8a8a8a"/><rect x="16" y="19" width="3" height="1" fill="#f0f0f0"/></svg></div></div><div class="help" style="left:490.5px;top:157.5px"><svg width="17.6" height="17.6" viewBox="0 0 17.6 17.6" style="position:absolute;left:0;top:0"><path d="M5.6 6.6 Q5.6 3.3 8.9 3.3 Q12.2 3.3 12.2 6.3 Q12.2 8.3 10.2 9.3 Q9 9.9 9 11.4 V12" fill="none" stroke="#fff" stroke-width="2.5"/><circle cx="9" cy="14.6" r="1.45" fill="#fff"/></svg></div>
<div class="btn" style="top:192px"><div class="bic"><svg width="26" height="22" viewBox="0 0 26 22"><g fill="#5f5f5f"><rect x="3.1" y="1.9" width="4.8" height="17.8" rx="0.7"/><rect x="9.3" y="0.4" width="6.2" height="22" rx="0.8"/><rect x="17" y="2" width="4.6" height="17.5" rx="0.7"/><circle cx="0.9" cy="5.8" r="0.8"/><circle cx="24.3" cy="5.8" r="0.8"/></g><g fill="#e6e6e6"><path d="M5.5 3.3 L6 4.9 L7.3 5.4 L6 5.9 L5.5 7.5 L5 5.9 L3.7 5.4 L5 4.9 Z"/><path d="M12.4 1.8 L13.1 3.9 L14.9 4.6 L13.1 5.3 L12.4 7.4 L11.7 5.3 L9.9 4.6 L11.7 3.9 Z"/><path d="M19.3 3.4 L19.8 5 L21.1 5.5 L19.8 6 L19.3 7.6 L18.8 6 L17.5 5.5 L18.8 5 Z"/><rect x="3" y="8.6" width="19" height="0.6"/></g></svg></div><span class="blab">CONCEPT LAB</span><div class="grip"><svg width="20" height="20" viewBox="0 0 20 20"><rect x="1" y="1" width="3" height="3" fill="#8a8a8a"/><rect x="1" y="4" width="3" height="1" fill="#f0f0f0"/><rect x="1" y="6" width="3" height="3" fill="#8a8a8a"/><rect x="1" y="9" width="3" height="1" fill="#f0f0f0"/><rect x="1" y="11" width="3" height="3" fill="#8a8a8a"/><rect x="1" y="14" width="3" height="1" fill="#f0f0f0"/><rect x="1" y="16" width="3" height="3" fill="#8a8a8a"/><rect x="1" y="19" width="3" height="1" fill="#f0f0f0"/><rect x="6" y="1" width="3" height="3" fill="#8a8a8a"/><rect x="6" y="4" width="3" height="1" fill="#f0f0f0"/><rect x="6" y="6" width="3" height="3" fill="#8a8a8a"/><rect x="6" y="9" width="3" height="1" fill="#f0f0f0"/><rect x="6" y="11" width="3" height="3" fill="#8a8a8a"/><rect x="6" y="14" width="3" height="1" fill="#f0f0f0"/><rect x="6" y="16" width="3" height="3" fill="#8a8a8a"/><rect x="6" y="19" width="3" height="1" fill="#f0f0f0"/><rect x="11" y="1" width="3" height="3" fill="#8a8a8a"/><rect x="11" y="4" width="3" height="1" fill="#f0f0f0"/><rect x="11" y="6" width="3" height="3" fill="#8a8a8a"/><rect x="11" y="9" width="3" height="1" fill="#f0f0f0"/><rect x="11" y="11" width="3" height="3" fill="#8a8a8a"/><rect x="11" y="14" width="3" height="1" fill="#f0f0f0"/><rect x="11" y="16" width="3" height="3" fill="#8a8a8a"/><rect x="11" y="19" width="3" height="1" fill="#f0f0f0"/><rect x="16" y="1" width="3" height="3" fill="#8a8a8a"/><rect x="16" y="4" width="3" height="1" fill="#f0f0f0"/><rect x="16" y="6" width="3" height="3" fill="#8a8a8a"/><rect x="16" y="9" width="3" height="1" fill="#f0f0f0"/><rect x="16" y="11" width="3" height="3" fill="#8a8a8a"/><rect x="16" y="14" width="3" height="1" fill="#f0f0f0"/><rect x="16" y="16" width="3" height="3" fill="#8a8a8a"/><rect x="16" y="19" width="3" height="1" fill="#f0f0f0"/></svg></div></div><div class="help" style="left:490.5px;top:199.5px"><svg width="17.6" height="17.6" viewBox="0 0 17.6 17.6" style="position:absolute;left:0;top:0"><path d="M5.6 6.6 Q5.6 3.3 8.9 3.3 Q12.2 3.3 12.2 6.3 Q12.2 8.3 10.2 9.3 Q9 9.9 9 11.4 V12" fill="none" stroke="#fff" stroke-width="2.5"/><circle cx="9" cy="14.6" r="1.45" fill="#fff"/></svg></div>
<div class="btn" style="top:234px"><div class="bic"><svg width="26" height="22" viewBox="0 0 26 22"><g fill="#5f5f5f"><path d="M8.6 5.8 H19.2 Q20.4 5.8 20.2 7 L18.6 19.4 Q18.4 20.7 17.2 20.7 H5.6 Q4.4 20.7 4.6 19.5 Q4.8 17.6 6.4 17.6 H8 Z"/><path d="M7 0.2 L7.8 2.2 L9.8 3 L7.8 3.8 L7 5.8 L6.2 3.8 L4.2 3 L6.2 2.2 Z"/><circle cx="3.6" cy="8" r="0.9"/><circle cx="22.6" cy="7" r="1"/></g><path d="M10.5 9.2 H17.5 M10.3 11.6 H17.2 M10.1 14 H15.5" stroke="#e6e6e6" stroke-width="0.9"/><path d="M6 18.4 H13.5" stroke="#e6e6e6" stroke-width="0.5"/></svg></div><span class="blab">STORYTELLING NOTES</span><div class="grip"><svg width="20" height="20" viewBox="0 0 20 20"><rect x="1" y="1" width="3" height="3" fill="#8a8a8a"/><rect x="1" y="4" width="3" height="1" fill="#f0f0f0"/><rect x="1" y="6" width="3" height="3" fill="#8a8a8a"/><rect x="1" y="9" width="3" height="1" fill="#f0f0f0"/><rect x="1" y="11" width="3" height="3" fill="#8a8a8a"/><rect x="1" y="14" width="3" height="1" fill="#f0f0f0"/><rect x="1" y="16" width="3" height="3" fill="#8a8a8a"/><rect x="1" y="19" width="3" height="1" fill="#f0f0f0"/><rect x="6" y="1" width="3" height="3" fill="#8a8a8a"/><rect x="6" y="4" width="3" height="1" fill="#f0f0f0"/><rect x="6" y="6" width="3" height="3" fill="#8a8a8a"/><rect x="6" y="9" width="3" height="1" fill="#f0f0f0"/><rect x="6" y="11" width="3" height="3" fill="#8a8a8a"/><rect x="6" y="14" width="3" height="1" fill="#f0f0f0"/><rect x="6" y="16" width="3" height="3" fill="#8a8a8a"/><rect x="6" y="19" width="3" height="1" fill="#f0f0f0"/><rect x="11" y="1" width="3" height="3" fill="#8a8a8a"/><rect x="11" y="4" width="3" height="1" fill="#f0f0f0"/><rect x="11" y="6" width="3" height="3" fill="#8a8a8a"/><rect x="11" y="9" width="3" height="1" fill="#f0f0f0"/><rect x="11" y="11" width="3" height="3" fill="#8a8a8a"/><rect x="11" y="14" width="3" height="1" fill="#f0f0f0"/><rect x="11" y="16" width="3" height="3" fill="#8a8a8a"/><rect x="11" y="19" width="3" height="1" fill="#f0f0f0"/><rect x="16" y="1" width="3" height="3" fill="#8a8a8a"/><rect x="16" y="4" width="3" height="1" fill="#f0f0f0"/><rect x="16" y="6" width="3" height="3" fill="#8a8a8a"/><rect x="16" y="9" width="3" height="1" fill="#f0f0f0"/><rect x="16" y="11" width="3" height="3" fill="#8a8a8a"/><rect x="16" y="14" width="3" height="1" fill="#f0f0f0"/><rect x="16" y="16" width="3" height="3" fill="#8a8a8a"/><rect x="16" y="19" width="3" height="1" fill="#f0f0f0"/></svg></div></div><div class="help" style="left:490.5px;top:241.5px"><svg width="17.6" height="17.6" viewBox="0 0 17.6 17.6" style="position:absolute;left:0;top:0"><path d="M5.6 6.6 Q5.6 3.3 8.9 3.3 Q12.2 3.3 12.2 6.3 Q12.2 8.3 10.2 9.3 Q9 9.9 9 11.4 V12" fill="none" stroke="#fff" stroke-width="2.5"/><circle cx="9" cy="14.6" r="1.45" fill="#fff"/></svg></div>

<div class="dl-desc">Click the button or drag it to the right to add<br>your new chart exactly where you want it.</div>

<div class="title">Dev/QA Hobbies Survey</div>
<div class="tut">Tutorial video</div>
<div class="tutpill"><svg width="40" height="20" viewBox="0 0 40 20"><path d="M7.4 7.7 Q7.4 4.9 10.2 4.9 Q13 4.9 13 7.5 Q13 9.3 11.2 10.2 Q10.2 10.8 10.2 12.4 V13.1" fill="none" stroke="#fff" stroke-width="2.5"/><circle cx="10.2" cy="15.9" r="1.4" fill="#fff"/><g fill="#fff"><circle cx="22.7" cy="5.6" r="2.3"/><circle cx="28.6" cy="6.3" r="1.85"/><rect x="21.4" y="9.3" width="8.6" height="6.4" rx="0.8"/><path d="M18 8.8 L22 10.2 V12.4 L18.6 10.4 Z"/><path d="M29.8 11.6 L34 9.4 V15.4 L29.8 13.4 Z"/></g></svg></div>
<div class="infobar"></div>
<div class="info1">N: <b>1000/1000</b> ID: <b>658558</b></div>
<div class="info2">Completed: <b>January 26 2023</b></div>
<div class="saved"><span>Saved</span><div class="sep"></div><svg class="tri" width="11" height="7" viewBox="0 0 11 7"><path d="M0.5 0.5 H10.5 L5.5 6.5 Z" fill="#fff"/></svg></div>
<svg class="gear" width="24" height="24" viewBox="0 0 24 24"><g fill="#878c94"><circle cx="12" cy="12" r="8"/><rect x="10" y="1" width="4" height="5" rx="1" transform="rotate(0 12 12)"/><rect x="10" y="1" width="4" height="5" rx="1" transform="rotate(45 12 12)"/><rect x="10" y="1" width="4" height="5" rx="1" transform="rotate(90 12 12)"/><rect x="10" y="1" width="4" height="5" rx="1" transform="rotate(135 12 12)"/><rect x="10" y="1" width="4" height="5" rx="1" transform="rotate(180 12 12)"/><rect x="10" y="1" width="4" height="5" rx="1" transform="rotate(225 12 12)"/><rect x="10" y="1" width="4" height="5" rx="1" transform="rotate(270 12 12)"/><rect x="10" y="1" width="4" height="5" rx="1" transform="rotate(315 12 12)"/></g><circle cx="12" cy="12" r="4.3" fill="#fdfdfd"/></svg>
<div class="verb"><svg width="20" height="16" viewBox="0 0 20 16"><path d="M10 0.5 C15.5 0.5 19.5 3.2 19.5 6.8 C19.5 10.3 15.5 13 10.5 13 L5 15.5 L6.2 12.5 C2.7 11.5 0.5 9.4 0.5 6.8 C0.5 3.2 4.5 0.5 10 0.5 Z" fill="#203b60"/><circle cx="5.8" cy="6.9" r="1.5" fill="#ddeaf4"/><circle cx="10" cy="6.9" r="1.5" fill="#ddeaf4"/><circle cx="14.2" cy="6.9" r="1.5" fill="#ddeaf4"/></svg><div class="vt"><b>4344</b><br><b>verbatims</b></div></div>
<div class="refresh"><svg width="22" height="22" viewBox="0 0 22 22"><g fill="none" stroke="#203b60" stroke-width="3.1"><path d="M7.6 5.2 A7 7 0 0 1 18.3 11.2"/><path d="M15 17.8 A7 7 0 0 1 4.3 11.8"/></g><path d="M13.9 10.6 L21.6 10.6 L17.7 15.9 Z" fill="#203b60"/><path d="M0.5 12.4 L8.2 12.4 L4.3 7.1 Z" fill="#203b60"/></svg></div>
<div class="infoshadow"></div>
<div class="card">
 <div class="chead">
  <div class="cbox"><svg width="12" height="10" viewBox="0 0 12 10"><path d="M1.5 5 L4.5 8 L10.5 1.5" fill="none" stroke="#3a9ed8" stroke-width="1.8"/></svg></div>
  <span class="pq">PQ1</span><span class="qt">Which of the following hobbies/interests do you enjoy?</span>
  <svg class="pencil" width="20" height="16" viewBox="0 0 20 16"><g transform="rotate(-38 10.5 8.2)"><rect x="4" y="5" width="13.5" height="6.4" rx="1" fill="#a3a3a3"/><path d="M4.2 5 V11.4 L-1.2 8.9 Q-1.8 8.2 -1.2 7.5 Z" fill="#a3a3a3"/><path d="M5 7.1 H14.5 M5 9.3 H14.5 M14.5 5 V11.4" stroke="#f1f1f2" stroke-width="0.6"/></g></svg>
  <svg class="cicon" width="22" height="22" viewBox="0 0 22 22"><circle cx="11" cy="10.7" r="8.65" fill="none" stroke="#a3a3a3" stroke-width="3.8"/><circle cx="11" cy="10.7" r="2" fill="#a3a3a3"/><path d="M12 12.4 H18.2 A7.2 7.2 0 0 1 12 18.2 Z" fill="#a3a3a3"/></svg>
 </div>
</div>
<div class="chartarea">
<div class="ldot" style="left:649.0px;top:223.7px;background:#f47c0b"></div><div class="ltxt" style="left:668.0px;top:222.7px">A1: Biking</div><div class="ldot" style="left:823.4px;top:223.7px;background:#ffc40a"></div><div class="ltxt" style="left:842.4px;top:222.7px">A2: Crafts</div><div class="ldot" style="left:998.0px;top:223.7px;background:#d65427"></div><div class="ltxt" style="left:1017.0px;top:222.7px">A3: Reading</div><div class="ldot" style="left:649.0px;top:240.0px;background:#b43d7b"></div><div class="ltxt" style="left:668.0px;top:239.0px">A4: Music</div><div class="ldot" style="left:823.4px;top:240.0px;background:#581a52"></div><div class="ltxt" style="left:842.4px;top:239.0px">A5: Physical fitness</div><div class="ldot" style="left:998.0px;top:240.0px;background:#78c5e4"></div><div class="ltxt" style="left:1017.0px;top:239.0px">A6: Art</div>
<svg class="navup" width="11" height="10" viewBox="0 0 11 10"><path d="M5.5 0.5 L10.5 9.5 H0.5 Z" fill="#c8c8c8"/></svg><div class="pg">1/3</div><svg class="navdn" width="11" height="10" viewBox="0 0 11 10"><path d="M0.5 0.5 H10.5 L5.5 9.5 Z" fill="#0e3a8a"/></svg>
<svg class="barico" width="17" height="13" viewBox="0 0 17 13"><g fill="#a9a9a9"><rect x="0.5" y="8" width="2" height="5" rx="0.5"/><rect x="3.7" y="1" width="2" height="12" rx="0.5"/><rect x="6.9" y="4" width="2" height="9" rx="0.5"/><rect x="10.1" y="6" width="2" height="7" rx="0.5"/><rect x="13.3" y="8" width="2" height="5" rx="0.5"/></g></svg>
<svg class="dd" width="11" height="6" viewBox="0 0 11 6"><path d="M0 0 H11 L5.5 5.5 Z" fill="#666"/></svg>
<svg class="hamb" width="18" height="14" viewBox="0 0 18 14"><g stroke="#555" stroke-width="2.6" stroke-linecap="round"><path d="M1.5 1.5 H16.5"/><path d="M1.5 6.8 H16.5"/><path d="M1.5 12.2 H16.5"/></g></svg>
<div class="zoombtn"><svg width="22" height="22" viewBox="0 0 22 22"><circle cx="9.5" cy="9.5" r="6.3" fill="none" stroke="#555" stroke-width="2.2"/><path d="M6.5 9.5 H12.5" stroke="#555" stroke-width="2"/><path d="M14 14 L18 18" stroke="#555" stroke-width="3" stroke-linecap="round"/></svg></div>
<div class="grid"></div><div class="axis"></div>
<div class="yl" style="top:282px">761</div><div class="yl" style="top:594px;left:592px">0</div>
<div class="ylab">respondents</div>
<div class="bar" style="left:620.9px;top:522.3px;height:77.7px;background:#f47c0b"></div><div class="xl" style="left:600.4px">Biking</div><div class="bar" style="left:676.4px;top:451.2px;height:148.8px;background:#ffc40a"></div><div class="xl" style="left:655.9px">Crafts</div><div class="bar" style="left:731.9px;top:307.7px;height:292.3px;background:#d65427"></div><div class="xl" style="left:711.4px">Reading</div><div class="bar" style="left:787.4px;top:362.9px;height:237.1px;background:#b43d7b"></div><div class="xl" style="left:766.9px">Music</div><div class="bar" style="left:842.9px;top:479.8px;height:120.2px;background:#581a52"></div><div class="xl" style="left:822.4px">Physi...</div><div class="bar" style="left:898.4px;top:483.5px;height:116.5px;background:#78c5e4"></div><div class="xl" style="left:877.9px">Art</div><div class="bar" style="left:953.9px;top:340.8px;height:259.2px;background:#135878"></div><div class="xl" style="left:933.4px">Movies</div><div class="bar" style="left:1009.4px;top:534.2px;height:65.8px;background:#f5962f"></div><div class="xl" style="left:988.9px">Sewing</div><div class="bar" style="left:1064.9px;top:414.4px;height:185.6px;background:#fdd135"></div><div class="xl" style="left:1044.4px">Baking</div><div class="bar" style="left:1120.4px;top:485.9px;height:114.1px;background:#d76f4f"></div><div class="xl" style="left:1099.9px">Camping</div><div class="bar" style="left:1175.9px;top:552.2px;height:47.8px;background:#b35183"></div><div class="xl" style="left:1155.4px">Other</div><div class="xl" style="left:1210.9px">None...</div>
</div>
<div class="thead"><span class="th1">Answers</span><svg class="th1t" width="9" height="7" viewBox="0 0 9 7"><path d="M4.5 0.5 L8.5 6.5 H0.5 Z" fill="#444"/></svg><div class="th1u"></div>
<div class="th2"><span class="rs">Respondents</span> <span class="tot">(1000 total)</span></div><svg class="th2t" width="9" height="8" viewBox="0 0 9 8"><path d="M0.5 0.5 H8.5 L4.5 7.5 Z" fill="#9a9a9a"/></svg><div class="th2u"></div></div>
<div class="row" style="top:660px"><div class="strip" style="background:#f47c0b"></div><span class="ak">A1:</span><span class="an">Biking</span><div class="rcell"><div class="track"><div class="fill" style="width:31.2px"></div></div><span class="pct" style="left:32.8px">19.0% <small>(190)</small></span></div></div><div class="row" style="top:685px"><div class="strip" style="background:#ffc40a"></div><span class="ak">A2:</span><span class="an">Crafts</span><span class="acc">ACCEPTED</span><div class="rcell"><div class="track"><div class="fill" style="width:59.7px"></div></div><span class="pct" style="left:61.0px">36.4% <small>(364)</small></span></div></div><div class="row" style="top:710px"><div class="strip" style="background:#d65427"></div><span class="ak">A3:</span><span class="an">Reading</span><span class="acc">ACCEPTED</span><div class="rcell"><div class="track"><div class="fill" style="width:117.3px"></div></div><span class="pct" style="left:74.0px">71.5% <small>(715)</small></span></div></div><div class="row" style="top:735px"><div class="strip" style="background:#b43d7b"></div><span class="ak">A4:</span><span class="an">Music</span><div class="rcell"><div class="track"><div class="fill" style="width:95.1px"></div></div><span class="pct" style="left:74.0px">58.0% <small>(580)</small></span></div></div><div class="row" style="top:760px"><div class="strip" style="background:#581a52"></div><span class="ak">A5:</span><span class="an">Physical fitness</span><div class="rcell"><div class="track"><div class="fill" style="width:48.2px"></div></div><span class="pct" style="left:49.0px">29.4% <small>(294)</small></span></div></div>
</body></html>
